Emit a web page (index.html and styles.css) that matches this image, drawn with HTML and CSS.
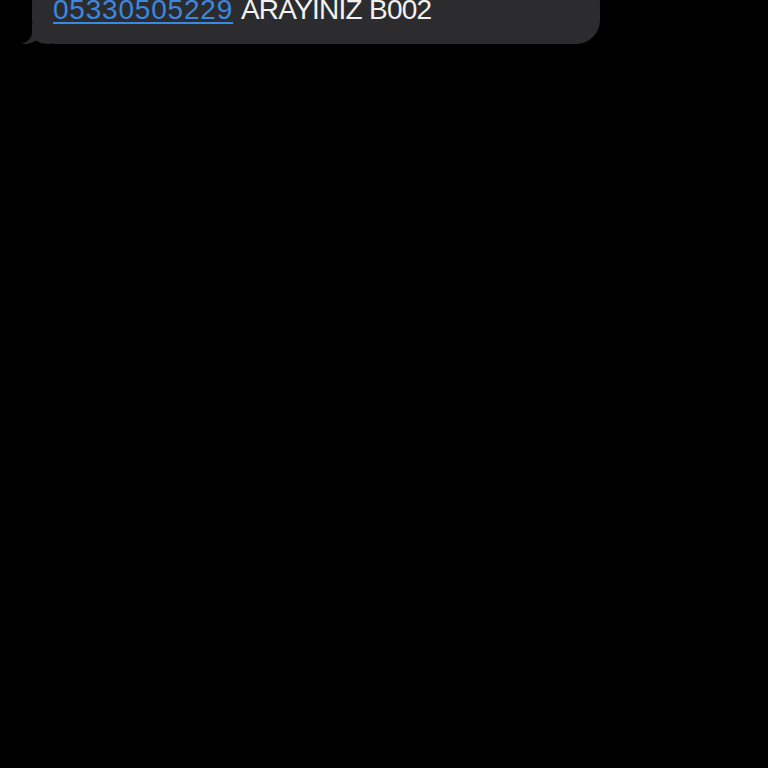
FILE: index.html
```html
<!DOCTYPE html>
<html lang="tr">
<head>
    <meta charset="UTF-8">
    <meta name="viewport" content="width=device-width, initial-scale=1.0">
    <title>Mesaj</title>
    <link rel="stylesheet" href="styles.css">
</head>
<body>
    <div class="thread">
        <div class="bubble">
            <a href="#" class="phone">05330505229</a> <span class="rest">ARAYINIZ B002</span>
            <svg class="tail" width="30" height="20" viewBox="0 0 30 20">
                <path d="M12 0 L12 8 C12 14 8 18 1 20 C7 20.6 12 19 16 16.5 C19 19 24 20 30 20 L30 0 Z" fill="#2c2c2e"/>
            </svg>
        </div>
    </div>
</body>
</html>
```

FILE: styles.css
```css
*{
    margin: 0;
    padding: 0;
    box-sizing: border-box;
}
html, body{
    background-color: #000;
    height: 100%;
    overflow: hidden;
}
body{
    font-family: "Liberation Sans", Arial, sans-serif;
}
.thread{
    padding-left: 32px;
}
.bubble{
    position: relative;
    width: 568px;
    margin-top: -20px;
    padding: 13px 22px 17px 21px;
    background-color: #2c2c2e;
    border-radius: 24px;
    color: #f2f2f2;
    font-size: 28px;
    line-height: 34px;
    white-space: nowrap;
}
.phone{
    color: #3b88e0;
    letter-spacing: 0.8px;
    text-decoration: underline;
    text-decoration-thickness: 2px;
    text-underline-offset: 3px;
}
.rest{
    letter-spacing: -0.75px;
}
.tail{
    position: absolute;
    left: -12px;
    bottom: 0;
    display: block;
}
```
